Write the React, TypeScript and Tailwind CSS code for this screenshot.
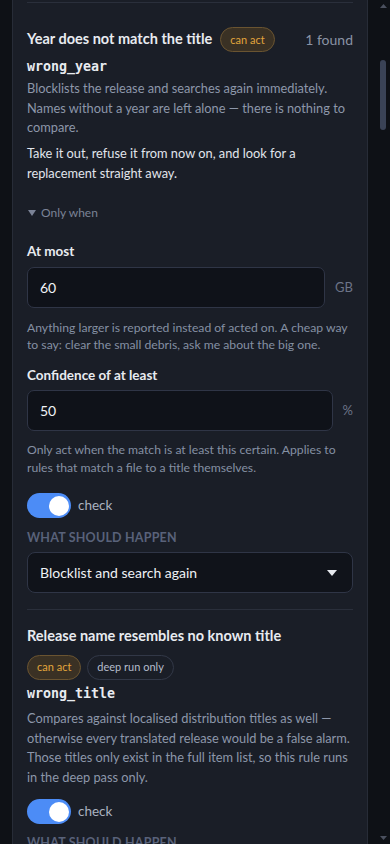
import React from 'react';

const Badge: React.FC<{ tone: 'act' | 'plain'; children: React.ReactNode }> = ({ tone, children }) => (
    <span
        className={`inline-flex items-center h-[25px] px-[9px] rounded-full border text-[11px] whitespace-nowrap ${
            tone === 'act'
                ? 'bg-[#3a3124] border-[#6a5431] text-[#e2a53c]'
                : 'bg-transparent border-[#323847] text-[#b4bccb]'
        }`}
    >
        {children}
    </span>
);

const Toggle: React.FC<{ label: string; className?: string }> = ({ label, className }) => (
    <div className={`flex items-center h-[25px] ${className ?? ''}`}>
        <div className="w-[44px] h-[25px] rounded-full bg-[#4c8cf6] flex items-center justify-end pr-[2px]">
            <div className="w-[20px] h-[20px] rounded-full bg-white" />
        </div>
        <span className="ml-[7px] text-[13.5px] text-[#aab2c0]">{label}</span>
    </div>
);

const NumberField: React.FC<{ value: string; unit: string; className?: string }> = ({ value, unit, className }) => (
    <div className={`flex items-center gap-[10px] ${className ?? ''}`}>
        <div className="flex-1 h-[41px] rounded-[7px] border border-[#2f3546] bg-[#0f1219] flex items-center px-[12px] text-[14px] text-[#f1f3f7]">
            {value}
        </div>
        <span className="text-[13px] text-[#6c7487]">{unit}</span>
    </div>
);

const SectionCaps: React.FC<{ className?: string }> = ({ className }) => (
    <div className={`h-[16px] leading-[16px] text-[12.5px] font-bold tracking-[0.2px] uppercase text-[#59627a] ${className ?? ''}`}>
        What should happen
    </div>
);

const App: React.FC = () => {
    return (
        <div className="h-[844px] w-[390px] overflow-hidden bg-[#0e1116] flex font-['Lato',sans-serif]">
            <div className="w-[12px] shrink-0" />
            <div className="w-[356px] shrink-0 bg-[#1a1e27] border-x border-[#272c37] px-[14px]">
                <div className="h-[2px]" />
                <div className="border-t border-[#2a2f3b]" />

                {/* rule one */}
                <div className="pt-[23px]">
                    <div className="h-[26px] flex items-center justify-between">
                        <div className="flex items-center">
                            <span className="text-[14.5px] font-bold text-[#e8ebf0]">Year does not match the title</span>
                            <span className="ml-[8px]">
                                <Badge tone="act">can act</Badge>
                            </span>
                        </div>
                        <span className="text-[14px] text-[#8a93a4]">1 found</span>
                    </div>
                    <div className="mt-[5px] h-[20px] leading-[20px] font-['DejaVu_Sans_Mono',monospace] font-bold text-[13.3px] text-[#e8ebf0]">
                        wrong_year
                    </div>
                    <p className="mt-[2px] text-[12.8px] leading-[19.5px] text-[#8d97aa]">
                        Blocklists the release and searches again immediately. Names without a year are left alone — there is nothing to compare.
                    </p>
                    <p className="mt-[6.5px] text-[12.8px] leading-[19.5px] text-[#e1e5ec]">
                        Take it out, refuse it from now on, and look for a replacement straight away.
                    </p>

                    <div className="mt-[20px] h-[20px] flex items-center text-[12px] text-[#7b8396]">
                        <svg width="8" height="6" viewBox="0 0 8 6" className="ml-[1px]">
                            <path d="M0 0 L8 0 L4 6 Z" fill="#7b8396" />
                        </svg>
                        <span className="ml-[5px]">Only when</span>
                    </div>

                    <div className="mt-[18px] h-[20px] leading-[20px] text-[13.5px] font-bold text-[#e8ebf0]">At most</div>
                    <NumberField value="60" unit="GB" className="mt-[6px]" />
                    <p className="mt-[11px] text-[12.2px] leading-[17px] text-[#8590a3]">
                        Anything larger is reported instead of acted on. A cheap way to say: clear the small debris, ask me about the big one.
                    </p>

                    <div className="mt-[12px] h-[20px] leading-[20px] text-[13.5px] font-bold text-[#e8ebf0]">Confidence of at least</div>
                    <NumberField value="50" unit="%" className="mt-[5px]" />
                    <p className="mt-[10px] text-[12.2px] leading-[17.5px] text-[#8590a3]">
                        Only act when the match is at least this certain. Applies to rules that match a file to a title themselves.
                    </p>

                    <Toggle label="check" className="mt-[17px]" />

                    <SectionCaps className="mt-[12px]" />
                    <div className="mt-[6px] h-[41px] rounded-[8px] border border-[#2f3546] bg-[#10131a] flex items-center justify-between pl-[12px] pr-[15px] text-[14px] text-[#eef1f5]">
                        <span>Blocklist and search again</span>
                        <svg width="10" height="6" viewBox="0 0 10 6">
                            <path d="M0 0 L10 0 L5 6 Z" fill="#e6e9ee" />
                        </svg>
                    </div>
                </div>

                <div className="mt-[16px] border-t border-[#2a2f3b]" />

                {/* rule two */}
                <div className="pt-[16px]">
                    <div className="h-[20px] leading-[20px] text-[14.5px] font-bold text-[#e8ebf0]">Release name resembles no known title</div>
                    <div className="mt-[9px] flex items-center gap-[6px]">
                        <Badge tone="act">can act</Badge>
                        <Badge tone="plain">deep run only</Badge>
                    </div>
                    <div className="mt-[4px] h-[20px] leading-[20px] font-['DejaVu_Sans_Mono',monospace] font-bold text-[13.3px] text-[#e8ebf0]">
                        wrong_title
                    </div>
                    <p className="mt-[5px] text-[12.8px] leading-[19.5px] text-[#8d97aa]">
                        Compares against localised distribution titles as well — otherwise every translated release would be a false alarm. Those titles only exist in the full item list, so this rule runs in the deep pass only.
                    </p>
                    <Toggle label="check" className="mt-[12px]" />
                    <SectionCaps className="mt-[11px]" />
                </div>
            </div>

            {/* scrollbar */}
            <div className="flex-1 flex justify-end">
                <div className="w-[12px] mr-[1px] flex flex-col items-center">
                    <svg width="7" height="4" viewBox="0 0 7 4" className="mt-[4px]">
                        <path d="M0 4 L7 4 L3.5 0 Z" fill="#4a505e" />
                    </svg>
                    <div className="mt-[52px] w-[6px] h-[70px] rounded-full bg-[#3a4356]" />
                    <div className="flex-1" />
                    <svg width="7" height="4" viewBox="0 0 7 4" className="mb-[4px]">
                        <path d="M0 0 L7 0 L3.5 4 Z" fill="#4a505e" />
                    </svg>
                </div>
            </div>
        </div>
    );
};

export default App;
